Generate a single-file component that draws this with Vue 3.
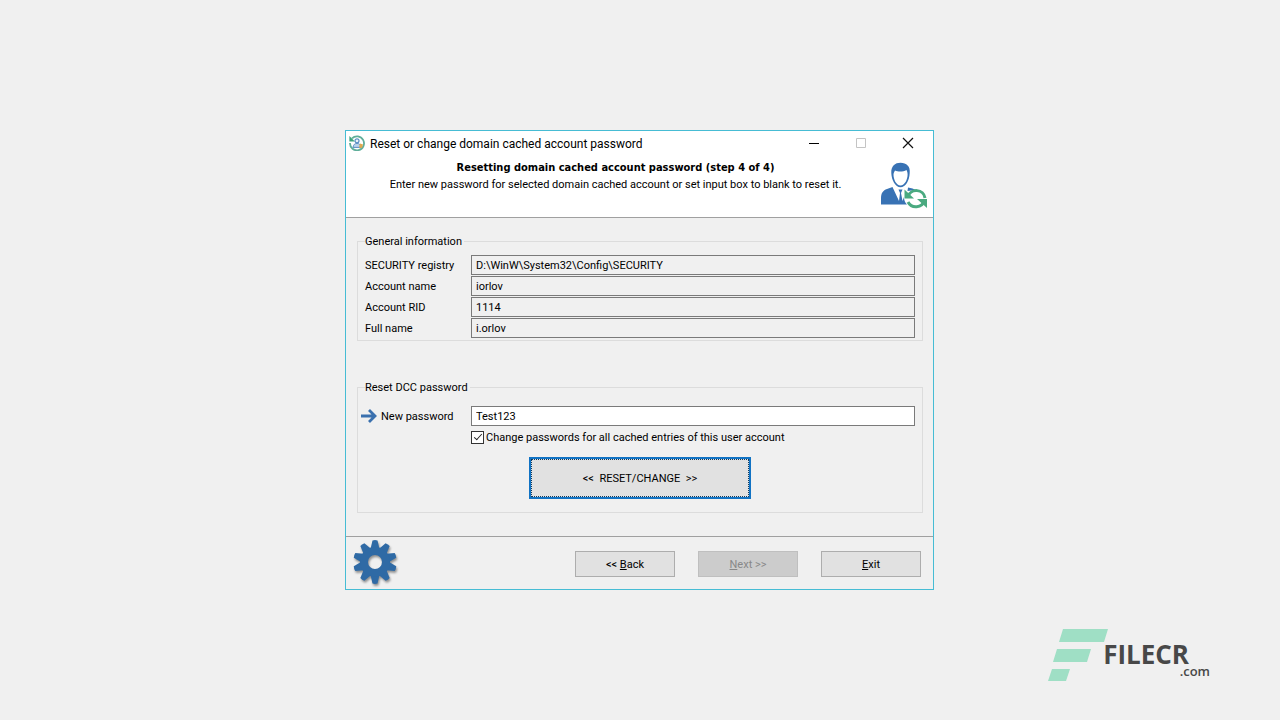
<script setup>
import { ref } from 'vue'

const details = [
  { id: 'registry', label: 'SECURITY registry', value: 'D:\\WinW\\System32\\Config\\SECURITY' },
  { id: 'account', label: 'Account name', value: 'iorlov' },
  { id: 'rid', label: 'Account RID', value: '1114' },
  { id: 'fullname', label: 'Full name', value: 'i.orlov' }
]
const password = ref('Test123')
const changeAll = ref(true)
const teeth = Array.from({ length: 10 }, (_, i) => i * 36)
</script>

<template>
  <div class="page">
    <main class="window">
      <header class="top">
        <div class="titlebar">
          <svg class="app-icon" viewBox="0 0 16 16" aria-hidden="true">
            <path d="M3 3.4A7 7 0 1 1 1 8" fill="none" stroke="#5fae9a" stroke-width="1.8" />
            <path d="M0.4 1v5.500h5.500z" fill="#3fa37e" />
            <circle cx="8" cy="5.8" r="2" fill="#eef4fa" stroke="#5b8fc4" stroke-width="1.2" />
            <path d="M4 12.4c.4-3 2-4 4-4s3.600 1 4 4z" fill="#b9d2ea" stroke="#5b8fc4" stroke-width="1" />
            <path d="M11 8.500l3 1-1 3.500-3-.5z" fill="#e0a94e" />
          </svg>
          <h1>Reset or change domain cached account password</h1>
          <div class="controls">
            <button type="button" aria-label="Minimize">
              <svg viewBox="0 0 12 12"><path d="M1 6.500h10" stroke="#000" /></svg>
            </button>
            <button type="button" aria-label="Maximize" disabled>
              <svg viewBox="0 0 12 12"><path d="M1.500 1.500h9v9h-9z" stroke="#c4c4c4" fill="none" /></svg>
            </button>
            <button type="button" aria-label="Close">
              <svg viewBox="0 0 12 12"><path d="M1 1l10 10M11 1L1 11" stroke="#111" stroke-width="1.2" /></svg>
            </button>
          </div>
        </div>
        <div class="intro">
          <div class="intro-text">
            <h2>Resetting domain cached account password (step 4 of 4)</h2>
            <p>Enter new password for selected domain cached account or set input box to blank to reset it.</p>
          </div>
          <svg class="user-icon" viewBox="0 0 48 48" aria-hidden="true">
            <path d="M1 42.500V36c0-5 2-7.500 6-9l5.500-2 6.500 14 1-8-1.500-3.500h4L21 31l1.500 8 1.500-4q0 5 3 7.500z" fill="#3872b4" />
            <path d="M28 25.500q5 .5 8 2.500l-8.500 1z" fill="#3872b4" />
            <path d="M11.300 11C11 4 15 .8 20.500.8c6 0 10 3.700 9.200 10.200-.3 7.500-4 14.200-9.200 14.200S11.500 18 11.300 11z" fill="#3872b4" />
            <path d="M13.500 12.500c0-1.500.8-2.700 1.500-4 3 1.300 8 1.500 11.500-.6.6 1.200 1.100 2.600 1.100 4.600 0 5-3 11-7.100 11S13.500 17.500 13.500 12.500z" fill="#fff" />
            <path d="M28 34.500a8.800 8.800 0 0 1 17 1.500M44.500 38.500A9 9 0 0 1 28 40" fill="none" stroke="#4aaa80" stroke-width="3" />
            <path d="M24.500 27.500v9h9.500z" fill="#4aaa80" />
            <path d="M47 46v-9h-10z" fill="#4aaa80" />
          </svg>
        </div>
      </header>

      <form class="body" @submit.prevent>
        <fieldset class="general">
          <legend>General information</legend>
          <div v-for="d in details" :key="d.id" class="row">
            <label :for="d.id">{{ d.label }}</label>
            <input :id="d.id" type="text" :value="d.value" readonly>
          </div>
        </fieldset>

        <fieldset class="reset">
          <legend>Reset DCC password</legend>
          <div class="row">
            <label class="with-arrow" for="password">
              <svg viewBox="0 0 16 16" aria-hidden="true">
                <path d="M0 7h14M8 1l6 6-6 6" fill="none" stroke="#3a70ae" stroke-width="2.800" />
              </svg>
              New password
            </label>
            <input id="password" v-model="password" type="text">
          </div>
          <div class="check">
            <input id="all" v-model="changeAll" type="checkbox">
            <label for="all">Change passwords for all cached entries of this user account</label>
          </div>
          <button type="submit" class="go">&lt;&lt;&nbsp; RESET/CHANGE &nbsp;&gt;&gt;</button>
        </fieldset>
      </form>

      <footer class="bottom">
        <svg class="gear" viewBox="0 0 46 46" aria-hidden="true">
          <g fill="#2f6aa5">
            <path v-for="a in teeth" :key="a" d="M18.500 10l2-8.500q2.500-.8 5 0l2 8.500z" :transform="`rotate(${a} 23 23)`" />
            <path fill-rule="evenodd" d="M23 8a15 15 0 1 0 0 30a15 15 0 1 0 0-30zM23 16a7 7 0 1 1 0 14a7 7 0 1 1 0-14z" />
          </g>
        </svg>
        <nav class="actions">
          <button type="button">&lt;&lt; <u>B</u>ack</button>
          <button type="button" disabled><u>N</u>ext &gt;&gt;</button>
          <button type="button"><u>E</u>xit</button>
        </nav>
      </footer>
    </main>

    <div class="brand">
      <svg viewBox="0 0 60 54" aria-hidden="true">
        <path d="M15 1h45l-4 13H11zM9 21h34l-4 13H5zM4 41h18l-4 12H0z" fill="#9fdfc5" />
      </svg>
      <div class="brand-name">
        <span class="brand-main">FILECR</span>
        <span class="brand-tld">.com</span>
      </div>
    </div>
  </div>
</template>

<style>
body {
  margin: 0;
  background: #f0f0f0;
}
</style>

<style scoped>
.page {
  position: relative;
  box-sizing: border-box;
  min-height: 100vh;
  padding-right: 1px;
  display: flex;
  align-items: center;
  justify-content: center;
  background: #f0f0f0;
  color: #000;
  font: 11px/14px Roboto, sans-serif;
}
.window {
  box-sizing: border-box;
  width: 100%;
  max-width: 589px;
  border: 1px solid #46bcd4;
  background: #f0f0f0;
}
h1, h2, p { margin: 0; }
button, input {
  box-sizing: border-box;
  margin: 0;
  font: inherit;
  color: inherit;
}
.top {
  background: #fff;
  border-bottom: 1px solid #a0a0a0;
}
.titlebar {
  display: flex;
  align-items: center;
  height: 25px;
  padding: 0 2px 0 3px;
}
.app-icon {
  width: 16px;
  height: 16px;
  margin: 0 5px 1px 0;
}
h1 {
  flex: 1;
  font-size: 12px;
  line-height: 16px;
  font-weight: 400;
  white-space: nowrap;
}
.controls {
  display: flex;
  align-self: flex-start;
}
.controls button {
  width: 47px;
  height: 24px;
  padding: 0;
  border: 0;
  background: none;
}
.controls svg {
  display: block;
  width: 12px;
  height: 12px;
  margin: auto;
}
.intro {
  position: relative;
  height: 61px;
}
.intro-text {
  padding: 3px 48px 0 0;
  text-align: center;
}
h2 {
  font: 700 11px/17px "DejaVu Sans Condensed", "DejaVu Sans", sans-serif;
}
.intro-text p { line-height: 18px; }
.user-icon {
  position: absolute;
  right: 5px;
  top: 6px;
  width: 48px;
  height: 48px;
}
.body {
  display: flex;
  flex-direction: column;
  gap: 38px;
  padding: 15px 10px 23px 11px;
}
fieldset {
  min-width: 0;
  margin: 0;
  border: 1px solid #dcdcdc;
}
.general { padding: 6px 7px 1px; }
.reset { padding: 11px 7px 13px; }
legend {
  margin: 0;
  padding: 2px 2px 0 0;
}
.row {
  display: flex;
  align-items: center;
  margin-bottom: 1px;
}
.row label {
  width: 106px;
  flex: none;
  padding-top: 2px;
  white-space: nowrap;
}
.row input {
  flex: 1;
  min-width: 0;
  height: 20px;
  padding: 1px 4px 0;
  border: 1px solid #7a7a7a;
  border-radius: 0;
  background: #fff;
  outline: none;
}
.row input[readonly] { background: #f0f0f0; }
.row .with-arrow {
  display: flex;
  align-items: center;
  gap: 4px;
  width: 110px;
  margin-left: -4px;
}
.with-arrow svg {
  width: 16px;
  height: 16px;
}
.check {
  display: flex;
  align-items: center;
  gap: 2px;
  height: 14px;
  margin: 4px 0 13px 106px;
}
.check label { padding-top: 2px; }
.check input {
  position: relative;
  appearance: none;
  width: 13px;
  height: 13px;
  border: 1px solid #333;
  background: #fff;
}
.check input:checked::after {
  content: "";
  position: absolute;
  left: 4px;
  top: 0;
  width: 3px;
  height: 7px;
  border: solid #222;
  border-width: 0 1px 1px 0;
  transform: rotate(42deg);
}
.go {
  display: block;
  width: 222px;
  height: 42px;
  margin: 0 auto;
  padding: 2px 0 0;
  border: 2px solid #1173c4;
  outline: 1px dotted #123a5c;
  outline-offset: -3px;
  background: #e1e1e1;
}
.bottom {
  display: flex;
  align-items: center;
  justify-content: space-between;
  height: 50px;
  padding: 2px 12px 0 6px;
  border-top: 1px solid #a0a0a0;
}
.gear {
  align-self: flex-start;
  width: 46px;
  height: 46px;
  filter: drop-shadow(1px 2px 1px rgba(0, 0, 0, 0.4));
}
.actions {
  display: flex;
  gap: 23px;
}
.actions button {
  width: 100px;
  height: 26px;
  padding: 2px 0 0;
  border: 1px solid #adadad;
  background: #e1e1e1;
}
.actions button:disabled {
  border-color: #bfbfbf;
  background: #ccc;
  color: #888;
}
.brand {
  position: absolute;
  right: 70px;
  bottom: 38px;
  display: flex;
  color: #484848;
}
.brand > svg {
  width: 60px;
  height: 54px;
}
.brand-name {
  display: flex;
  flex-direction: column;
  margin-left: -5px;
  padding-top: 14px;
  font-family: "Open Sans", sans-serif;
}
.brand-main {
  font-size: 26px;
  line-height: 25px;
  font-weight: 700;
  padding-right: 21px;
}
.brand-tld {
  align-self: flex-end;
  font-size: 13px;
  line-height: 8px;
  font-weight: 600;
}
</style>
